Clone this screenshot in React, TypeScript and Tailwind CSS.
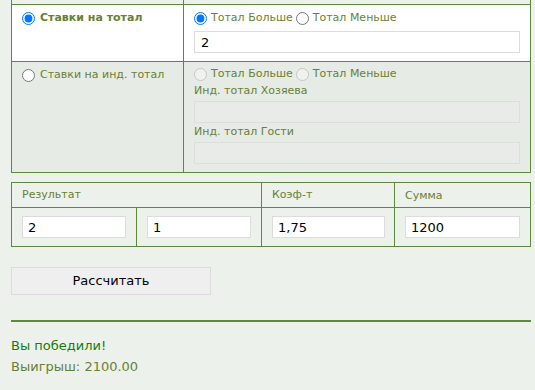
import React from 'react';

const font = "font-['Verdana','DejaVu_Sans',sans-serif]";

const Radio = ({ checked, disabled }: { checked?: boolean; disabled?: boolean }) => (
  <input
    type="radio"
    checked={checked}
    disabled={disabled}
    readOnly
    className="m-0 mr-[4px] h-[13px] w-[13px] accent-[#0075ff]"
  />
);

const App: React.FC = () => {
  return (
    <div className={`min-h-[390px] bg-[#ecf1eb] pl-[11px] pr-[4px] text-[11px] text-[#6a7f35] ${font}`}>
      {/* top: totals table */}
      <div className="border-x border-b border-[#5b8a3a]">
        <div className="flex h-[4px]">
          <div className="w-[172px] border-r border-[#5b8a3a]" />
          <div className="flex-1" />
        </div>
        <div className="flex border-t border-[#5b8a3a] bg-white">
          <div className="w-[172px] border-r border-[#5b8a3a] px-[10px] pt-[6px] font-bold">
            <label className="flex h-[14px] items-center">
              <Radio checked />
              <span className="ml-[1px]">Ставки на тотал</span>
            </label>
          </div>
          <div className="flex-1 px-[10px] pt-[6px] pb-[8px]">
            <div className="flex h-[14px] items-center">
              <Radio checked />
              <span className="mr-[3px]">Тотал Больше</span>
              <Radio />
              <span>Тотал Меньше</span>
            </div>
            <input
              readOnly
              value="2"
              className="mt-[6px] block h-[22px] w-[326px] border border-[#dcdcdc] bg-white px-[6px] text-[13px] text-black outline-none"
            />
          </div>
        </div>
        <div className="flex border-t border-[#5b8a3a] bg-[#e6ebe5]">
          <div className="w-[172px] border-r border-[#5b8a3a] px-[10px] pt-[6px]">
            <label className="flex h-[14px] items-center">
              <Radio />
              <span className="ml-[1px]">Ставки на инд. тотал</span>
            </label>
          </div>
          <div className="flex-1 px-[10px] pt-[5px] pb-[8px]">
            <div className="flex h-[14px] items-center">
              <Radio disabled />
              <span className="mr-[3px]">Тотал Больше</span>
              <Radio disabled />
              <span>Тотал Меньше</span>
            </div>
            <div className="mt-[3px] leading-[14px]">Инд. тотал Хозяева</div>
            <div className="mt-[3px] h-[22px] w-[326px] border border-[#dcdfdb] bg-[#e8ebe7]" />
            <div className="mt-[2px] leading-[14px]">Инд. тотал Гости</div>
            <div className="mt-[3px] h-[22px] w-[326px] border border-[#dcdfdb] bg-[#e8ebe7]" />
          </div>
        </div>
      </div>

      {/* result table */}
      <div className="mt-[9px] border border-[#5b8a3a]">
        <div className="grid h-[24px] grid-cols-[250px_133px_1fr] items-center">
          <div className="h-full border-r border-[#5b8a3a] px-[10px] leading-[23px]">Результат</div>
          <div className="h-full border-r border-[#5b8a3a] px-[10px] leading-[23px]">Коэф-т</div>
          <div className="px-[10px] leading-[23px]">Сумма</div>
        </div>
        <div className="grid grid-cols-[125px_125px_133px_1fr] border-t border-[#5b8a3a]">
          {[
            { v: '2', w: 'w-[104px]' },
            { v: '1', w: 'w-[104px]' },
            { v: '1,75', w: 'w-[113px]' },
            { v: '1200', w: 'w-[115px]' },
          ].map((f, i) => (
            <div key={i} className={`py-[8px] px-[10px] ${i < 3 ? 'border-r border-[#5b8a3a]' : ''}`}>
              <input
                readOnly
                value={f.v}
                className={`block h-[22px] ${f.w} border border-[#dcdcdc] bg-white px-[5px] text-[13px] text-black outline-none`}
              />
            </div>
          ))}
        </div>
      </div>

      <button className="mt-[20px] h-[28px] w-[200px] border border-[#dcdcdc] bg-[#efefef] text-[13px] text-black">
        Рассчитать
      </button>

      <div className="mt-[25px] h-[2px] bg-[#5b8a3a]" />

      <div className="pt-[13px] text-[13px] leading-[21px]">
        <div className="text-[#1a7a10]">Вы победили!</div>
        <div>Выигрыш: 2100.00</div>
      </div>
      <div className="mt-[13px] h-[2px] bg-[#d8dbd7]" />
    </div>
  );
};

export default App;
